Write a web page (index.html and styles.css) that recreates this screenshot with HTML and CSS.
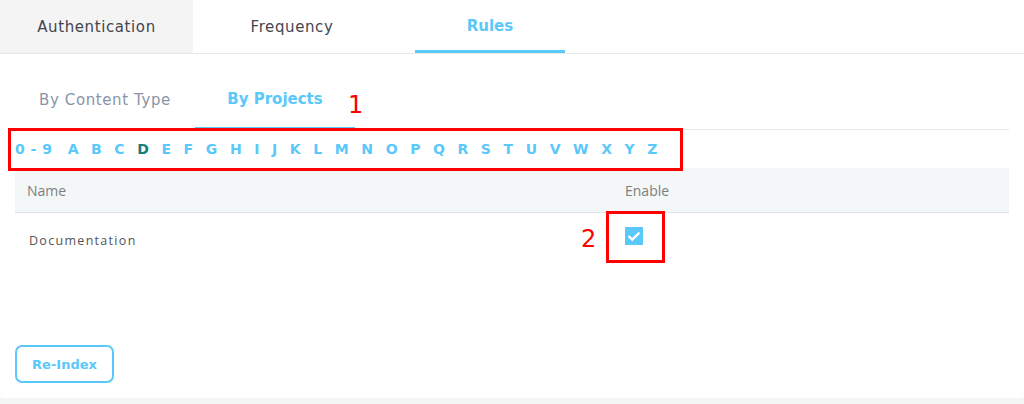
FILE: index.html
```html
<!DOCTYPE html>
<html>
<head>
<meta charset="utf-8">
<link rel="stylesheet" href="styles.css">
</head>
<body>
<div class="panel">
  <div class="tabs">
    <div class="tab tab-auth">Authentication</div>
    <div class="tab tab-freq">Frequency</div>
    <div class="tab tab-rules active">Rules</div>
  </div>
  <div class="content">
    <div class="subtabs">
      <div class="subtab sub-type">By Content Type</div>
      <div class="subtab sub-proj active">By Projects</div>
    </div>
    <div class="letters">
      <span class="digits">0 - 9</span><span>A</span><span>B</span><span>C</span><span class="cur">D</span><span>E</span><span>F</span><span>G</span><span>H</span><span>I</span><span>J</span><span>K</span><span>L</span><span>M</span><span>N</span><span>O</span><span>P</span><span>Q</span><span>R</span><span>S</span><span>T</span><span>U</span><span>V</span><span>W</span><span>X</span><span>Y</span><span>Z</span>
    </div>
    <div class="table">
      <div class="thead">
        <div class="col-name">Name</div>
        <div class="col-enable">Enable</div>
      </div>
      <div class="trow">
        <div class="col-name cell-name">Documentation</div>
        <div class="col-enable">
          <span class="check">
            <svg width="18" height="18" viewBox="0 0 18 18"><path d="M3.6 9.2 L7.2 12.6 L14.4 5.6" fill="none" stroke="#fff" stroke-width="2.4"/></svg>
          </span>
        </div>
      </div>
    </div>
    <div class="actions">
      <button class="btn">Re-Index</button>
    </div>
  </div>
  <div class="mark mark-1"></div>
  <div class="num num-1">1</div>
  <div class="mark mark-2"></div>
  <div class="num num-2">2</div>
</div>
</body>
</html>
```
FILE: styles.css
```css
html, body {
  margin: 0;
  padding: 0;
}
body {
  background: #f2f7f6;
  font-family: "DejaVu Sans", "Open Sans", sans-serif;
  width: 1024px;
  height: 404px;
  overflow: hidden;
}
.panel {
  position: relative;
  background: #fff;
  height: 398px;
  border-radius: 0 0 4px 4px;
}
.tabs {
  display: flex;
  height: 53px;
  border-bottom: 1px solid #e8e8e8;
}
.tab {
  display: flex;
  align-items: center;
  justify-content: center;
  font-size: 15px;
  letter-spacing: 0.6px;
  color: #44444f;
  box-sizing: border-box;
}
.tab-auth {
  width: 193px;
  background: #f4f4f4;
}
.tab-freq {
  width: 198px;
  margin-right: 24px;
}
.tab-rules {
  width: 150px;
}
.tab.active {
  color: #5bc8fa;
  font-weight: bold;
  letter-spacing: 0;
  border-bottom: 3px solid #5bc8fa;
  padding-top: 2px;
}
.content {
  padding: 0 15px;
}
.subtabs {
  display: flex;
  height: 75px;
  border-bottom: 1px solid #e8e8e8;
}
.subtab {
  display: flex;
  align-items: center;
  justify-content: center;
  font-size: 15px;
  letter-spacing: 0.6px;
  color: #8995a7;
  padding-top: 17px;
  box-sizing: border-box;
}
.sub-type {
  width: 180px;
}
.sub-proj {
  width: 160px;
}
.subtab.active {
  color: #5bc8fa;
  font-weight: bold;
  letter-spacing: 0;
  border-bottom: 2px solid #5bc8fa;
}
.letters {
  display: flex;
  align-items: center;
  gap: 12.6px;
  height: 38px;
  font-size: 14px;
  font-weight: bold;
  color: #5bc8fa;
}
.letters .digits {
  margin-right: 3px;
  word-spacing: 1px;
}
.letters .cur {
  color: #127f7a;
}
.thead {
  display: flex;
  align-items: center;
  height: 44px;
  background: #f4f7f8;
  border-bottom: 1px solid #dde3e6;
  font-size: 14px;
  color: #7e7e7e;
  font-family: "Open Sans", sans-serif;
}
.col-name {
  width: 598px;
  padding-left: 12px;
}
.col-enable {
  flex: 1;
}
.trow {
  display: flex;
  align-items: center;
  height: 55px;
}
.cell-name {
  padding-left: 14px;
  width: 596px;
  font-family: "Open Sans", sans-serif;
  font-size: 12.5px;
  letter-spacing: 1.3px;
  color: #555;
}
.check {
  display: block;
  width: 18px;
  height: 18px;
  background: #5bc8fa;
  margin-top: -10px;
}
.check svg {
  display: block;
}
.actions {
  padding-top: 77px;
}
.btn {
  width: 99px;
  height: 38px;
  border: 2px solid #5bc8fa;
  border-radius: 7px;
  background: #fff;
  color: #5bc8fa;
  font-family: "DejaVu Sans", sans-serif;
  font-weight: bold;
  font-size: 13px;
  padding: 0;
}
.mark {
  position: absolute;
  border: 3px solid #f00;
  box-sizing: border-box;
}
.mark-1 {
  left: 8px;
  top: 128px;
  width: 675px;
  height: 43px;
}
.mark-2 {
  left: 606px;
  top: 211px;
  width: 59px;
  height: 52px;
}
.num {
  position: absolute;
  color: #f00;
  font-family: "DejaVu Sans", sans-serif;
  font-size: 24px;
  line-height: 1;
}
.num-1 {
  left: 348px;
  top: 93px;
}
.num-2 {
  left: 581px;
  top: 227px;
}
```
